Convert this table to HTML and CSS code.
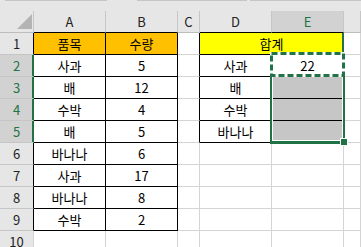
FILE: index.html
```html
<!DOCTYPE html>
<html lang="ko">
<head>
  <meta charset="UTF-8" />
  <meta name="viewport" content="width=device-width, initial-scale=1" />
  <title>합계 - Sheet1</title>
  <link rel="stylesheet" href="styles.css">
</head>
<body>

  <!-- bottom edge of the formula bar boxes -->
  <div class="formula-strip">
    <span class="fx-box name-box"></span>
    <span class="fx-box fx-mid"></span>
    <span class="fx-box fx-input"></span>
  </div>

  <div class="sheet">
    <!-- column headers -->
    <div class="cell head corner"><span class="corner-mark"></span></div>
    <div class="cell head bb">A</div>
    <div class="cell head bb">B</div>
    <div class="cell head">C</div>
    <div class="cell head bb">D</div>
    <div class="cell head bb sel-head">E</div>
    <div class="cell head"></div>

    <!-- row 1 -->
    <div class="cell rowhead br">1</div>
    <div class="cell br bb orange">품목</div>
    <div class="cell br bb orange">수량</div>
    <div class="cell br"></div>
    <div class="cell merged bb yellow">합계</div>
    <div class="cell"></div>

    <!-- row 2 -->
    <div class="cell rowhead sel-row">2</div>
    <div class="cell br bb">사과</div>
    <div class="cell br bb">5</div>
    <div class="cell br"></div>
    <div class="cell br bb">사과</div>
    <div class="cell bb">22</div>
    <div class="cell"></div>

    <!-- row 3 -->
    <div class="cell rowhead sel-row">3</div>
    <div class="cell br bb">배</div>
    <div class="cell br bb">12</div>
    <div class="cell br"></div>
    <div class="cell br bb">배</div>
    <div class="cell bb shaded"></div>
    <div class="cell"></div>

    <!-- row 4 -->
    <div class="cell rowhead sel-row">4</div>
    <div class="cell br bb">수박</div>
    <div class="cell br bb">4</div>
    <div class="cell br"></div>
    <div class="cell br bb">수박</div>
    <div class="cell bb shaded"></div>
    <div class="cell"></div>

    <!-- row 5 -->
    <div class="cell rowhead sel-row">5</div>
    <div class="cell br bb">배</div>
    <div class="cell br bb">5</div>
    <div class="cell br"></div>
    <div class="cell br bb">바나나</div>
    <div class="cell bb shaded"></div>
    <div class="cell"></div>

    <!-- row 6 -->
    <div class="cell rowhead br">6</div>
    <div class="cell br bb">바나나</div>
    <div class="cell br bb">6</div>
    <div class="cell"></div>
    <div class="cell"></div>
    <div class="cell"></div>
    <div class="cell"></div>

    <!-- row 7 -->
    <div class="cell rowhead br">7</div>
    <div class="cell br bb">사과</div>
    <div class="cell br bb">17</div>
    <div class="cell"></div>
    <div class="cell"></div>
    <div class="cell"></div>
    <div class="cell"></div>

    <!-- row 8 -->
    <div class="cell rowhead br">8</div>
    <div class="cell br bb">바나나</div>
    <div class="cell br bb">8</div>
    <div class="cell"></div>
    <div class="cell"></div>
    <div class="cell"></div>
    <div class="cell"></div>

    <!-- row 9 -->
    <div class="cell rowhead br">9</div>
    <div class="cell br bb">수박</div>
    <div class="cell br bb">2</div>
    <div class="cell"></div>
    <div class="cell"></div>
    <div class="cell"></div>
    <div class="cell"></div>

    <!-- row 10 -->
    <div class="cell rowhead">10</div>
    <div class="cell"></div>
    <div class="cell"></div>
    <div class="cell"></div>
    <div class="cell"></div>
    <div class="cell"></div>
    <div class="cell"></div>

    <!-- selection E2:E5, copy marquee on E2, fill handle -->
    <div class="selection"></div>
    <svg class="marquee" width="75" height="25" viewBox="0 0 75 25">
      <rect x="1.5" y="1.5" width="72" height="22" fill="none" stroke="#fff" stroke-width="3" />
      <rect x="1.5" y="1.5" width="72" height="22" fill="none" stroke="#217346" stroke-width="3" stroke-dasharray="6 3" />
    </svg>
    <div class="fill-handle"></div>
  </div>

</body>
</html>
```

FILE: styles.css
```css
body {
  margin: 0;
  background: #fff;
  font-family: "Noto Sans CJK KR", "Noto Sans", sans-serif;
  font-size: 13px;
  color: #000;
  overflow: hidden;
}

/* Formula bar remains */
.formula-strip {
  display: flex;
  height: 11px;
  padding-left: 5px;
  background: #e6e6e6;
}
.fx-box {
  height: 0;
  border-top: 1px solid #c6c6c6;
}
.name-box { width: 102px; margin-right: 30px; }
.fx-mid { width: 110px; margin-right: 3px; }
.fx-input { flex: 1; }

/* Grid */
.sheet {
  position: relative;
  display: grid;
  grid-template-columns: 34px 72px 72px 22px 72px 72px 1fr;
  grid-auto-rows: 22px;
}

.cell {
  box-sizing: border-box;
  border-right: 1px solid #d4d4d4;
  border-bottom: 1px solid #d4d4d4;
  text-align: center;
  line-height: 21px;
  white-space: nowrap;
  overflow: hidden;
}
.br { border-right-color: #000; }
.bb { border-bottom-color: #000; }

/* Headers */
.head {
  background: #e6e6e6;
  border-right-color: #c6c6c6;
  border-bottom-color: #bdbdbd;
  color: #222;
}
.head.bb { border-bottom-color: #000; }
.corner {
  position: relative;
}
.corner-mark {
  position: absolute;
  right: 1px;
  bottom: 3px;
  width: 0;
  height: 0;
  border-left: 15px solid transparent;
  border-bottom: 15px solid #b4b4b4;
}
.sel-head {
  background: #d2d2d2;
  color: #217346;
}

.rowhead {
  background: #e6e6e6;
  border-bottom-color: #c6c6c6;
  color: #222;
}
.rowhead.br { border-right-color: #000; }
.sel-row {
  background: #d2d2d2;
  color: #217346;
  border-right-color: #217346;
  box-shadow: inset -1px 0 #217346;
}

/* Fills */
.orange { background: #ffc000; }
.yellow { background: #ffff00; }
.shaded { background: #c6c6c6; }
.merged {
  grid-column: span 2;
  border-right: 1px solid #217346;
  box-shadow: inset -1px 0 #217346;
}

/* Selection overlay */
.selection {
  position: absolute;
  left: 270px;
  top: 41px;
  width: 75px;
  height: 92px;
  box-sizing: border-box;
  border: 2px solid #217346;
  border-bottom-width: 3px;
  box-shadow: inset 0 0 0 1px #fff;
}
.marquee {
  position: absolute;
  left: 270px;
  top: 41px;
}
.fill-handle {
  position: absolute;
  left: 341px;
  top: 128px;
  width: 6px;
  height: 6px;
  background: #217346;
  outline: 1px solid #fff;
}
```
